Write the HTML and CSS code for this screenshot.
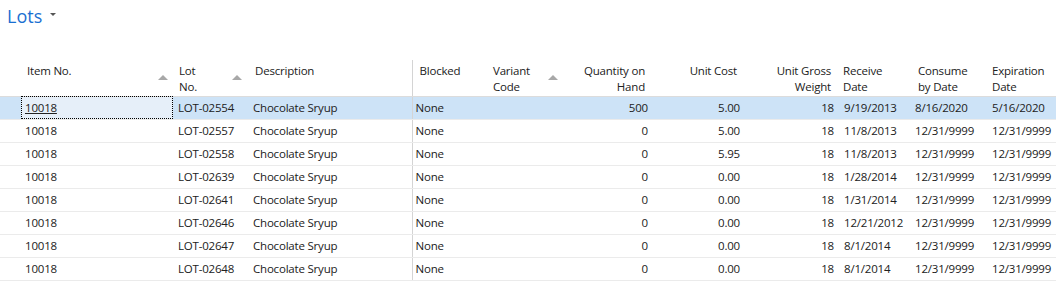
FILE: index.html
```html
<!DOCTYPE html>
<html lang="en">
<head>
    <meta charset="UTF-8">
    <title>Lots</title>
<link rel="stylesheet" href="styles.css">
</head>
<body>
<div id="wrap">
    <h1 class="page-title">Lots <span class="title-drop"></span></h1>

    <table class="grid">
        <colgroup>
            <col class="w-lead">
            <col class="w-item">
            <col class="w-lot">
            <col class="w-desc">
            <col class="w-blocked">
            <col class="w-variant">
            <col class="w-qty">
            <col class="w-cost">
            <col class="w-weight">
            <col class="w-recv">
            <col class="w-cons">
            <col class="w-exp">
        </colgroup>
        <thead>
            <tr>
                <th></th>
                <th class="sort">Item No.</th>
                <th class="sort">Lot<br>No.</th>
                <th class="desc">Description</th>
                <th class="split">Blocked</th>
                <th class="sort">Variant<br>Code</th>
                <th class="num">Quantity on<br>Hand</th>
                <th class="num">Unit Cost</th>
                <th class="num">Unit Gross<br>Weight</th>
                <th class="recv">Receive<br>Date</th>
                <th class="cons">Consume<br>by Date</th>
                <th class="exp">Expiration<br>Date</th>
            </tr>
        </thead>
        <tbody>
            <tr class="selected">
                <td></td>
                <td class="focus"><a href="#" class="link">10018</a></td>
                <td class="lot">LOT-02554</td><td class="desc">Chocolate Sryup</td><td class="split">None</td><td></td>
                <td class="num">500</td><td class="num">5.00</td><td class="num">18</td>
                <td class="recv">9/19/2013</td><td class="cons">8/16/2020</td><td class="exp">5/16/2020</td>
            </tr>
            <tr>
                <td></td><td>10018</td>
                <td class="lot">LOT-02557</td><td class="desc">Chocolate Sryup</td><td class="split">None</td><td></td>
                <td class="num">0</td><td class="num">5.00</td><td class="num">18</td>
                <td class="recv">11/8/2013</td><td class="cons">12/31/9999</td><td class="exp">12/31/9999</td>
            </tr>
            <tr>
                <td></td><td>10018</td>
                <td class="lot">LOT-02558</td><td class="desc">Chocolate Sryup</td><td class="split">None</td><td></td>
                <td class="num">0</td><td class="num">5.95</td><td class="num">18</td>
                <td class="recv">11/8/2013</td><td class="cons">12/31/9999</td><td class="exp">12/31/9999</td>
            </tr>
            <tr>
                <td></td><td>10018</td>
                <td class="lot">LOT-02639</td><td class="desc">Chocolate Sryup</td><td class="split">None</td><td></td>
                <td class="num">0</td><td class="num">0.00</td><td class="num">18</td>
                <td class="recv">1/28/2014</td><td class="cons">12/31/9999</td><td class="exp">12/31/9999</td>
            </tr>
            <tr>
                <td></td><td>10018</td>
                <td class="lot">LOT-02641</td><td class="desc">Chocolate Sryup</td><td class="split">None</td><td></td>
                <td class="num">0</td><td class="num">0.00</td><td class="num">18</td>
                <td class="recv">1/31/2014</td><td class="cons">12/31/9999</td><td class="exp">12/31/9999</td>
            </tr>
            <tr>
                <td></td><td>10018</td>
                <td class="lot">LOT-02646</td><td class="desc">Chocolate Sryup</td><td class="split">None</td><td></td>
                <td class="num">0</td><td class="num">0.00</td><td class="num">18</td>
                <td class="recv">12/21/2012</td><td class="cons">12/31/9999</td><td class="exp">12/31/9999</td>
            </tr>
            <tr>
                <td></td><td>10018</td>
                <td class="lot">LOT-02647</td><td class="desc">Chocolate Sryup</td><td class="split">None</td><td></td>
                <td class="num">0</td><td class="num">0.00</td><td class="num">18</td>
                <td class="recv">8/1/2014</td><td class="cons">12/31/9999</td><td class="exp">12/31/9999</td>
            </tr>
            <tr>
                <td></td><td>10018</td>
                <td class="lot">LOT-02648</td><td class="desc">Chocolate Sryup</td><td class="split">None</td><td></td>
                <td class="num">0</td><td class="num">0.00</td><td class="num">18</td>
                <td class="recv">8/1/2014</td><td class="cons">12/31/9999</td><td class="exp">12/31/9999</td>
            </tr>
        </tbody>
    </table>
</div>
</body>
</html>
```

FILE: styles.css
```css
* {margin: 0; padding: 0; box-sizing: border-box;}
body {background: #fff; font-family: "Open Sans", "Noto Sans", sans-serif; font-size: 11.5px; letter-spacing: -0.2px;
    color: #212121; overflow: hidden;}

#wrap {width: 1056px; height: 284px; background-color: #fff;}

/* title */
.page-title {display: flex; align-items: center; height: 32px; padding-left: 7px; padding-bottom: 1px;
    font-size: 18px; font-weight: 400; letter-spacing: 0; color: #1a6fd1;}
.title-drop {display: inline-block; margin-left: 8px; margin-top: -3px; width: 0; height: 0;
    border-left: 3px solid transparent; border-right: 3px solid transparent; border-top: 3px solid #555;}

/* grid */
.grid {margin-top: 28px; width: 1056px; table-layout: fixed; border-collapse: collapse;}
.w-lead {width: 21px;}
.w-item {width: 152px;}
.w-lot {width: 74px;}
.w-desc {width: 165px;}
.w-blocked {width: 75px;}
.w-variant {width: 76px;}
.w-qty {width: 89px;}
.w-cost {width: 92px;}
.w-weight {width: 94px;}
.w-recv {width: 73px;}
.w-cons {width: 76px;}
.w-exp {width: 69px;}

.grid th {position: relative; height: 36px; padding: 3px 6px 0; vertical-align: top; text-align: left;
    font-weight: 400; line-height: 16px; white-space: nowrap; border-bottom: 1px solid #dcdcdc;}
.grid td {height: 23px; padding: 0 4px; line-height: 22px; white-space: nowrap; overflow: hidden;
    border-bottom: 1px solid #ebebeb;}

.grid td.lot {padding-left: 5px;}
.grid .desc {padding-left: 6px;}
.grid th.desc {padding-left: 8px;}

.grid .split {border-left: 1px solid #d4d4d4;}
.grid th.split {padding-left: 7px;}
.grid td.split {padding-left: 3px;}

.grid .num {text-align: right;}
.grid th.num {padding-right: 7px;}
.grid td.num {padding-right: 4px;}
.grid th.recv {padding-left: 5px;}
.grid td.recv {padding-left: 6px;}
.grid td.cons {padding-left: 4px;}
.grid th.cons {padding-left: 7px;}
.grid .exp {padding-left: 5px;}

/* sort arrows */
.grid th.sort::after {content: ""; position: absolute; top: 15px; right: 5px; width: 0; height: 0;
    border-left: 5px solid transparent; border-right: 5px solid transparent; border-bottom: 5px solid #a8a8a8;}

/* selected row */
.grid tr.selected td {background-color: #cde3f7;}
.grid tr.selected td.focus {background-color: #e6eff9; outline: 1px dotted #000; outline-offset: -1px;}
.link {color: #212121; text-decoration: underline;}
```
